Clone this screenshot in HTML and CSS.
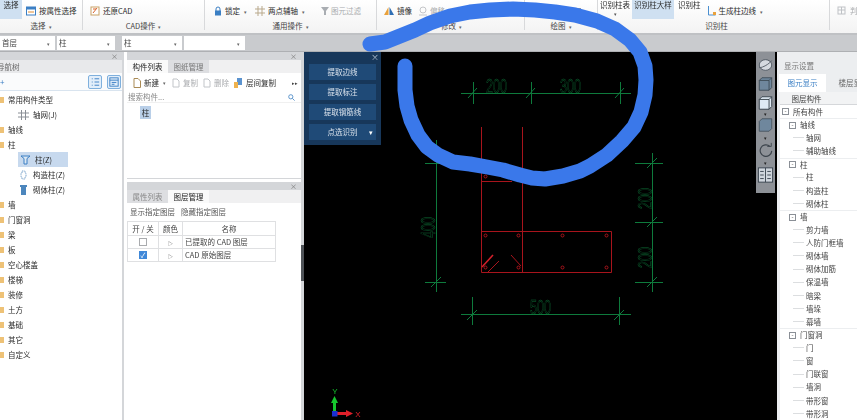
FILE: index.html
```html
<!DOCTYPE html>
<html lang="zh-CN">
<head>
  <meta charset="UTF-8">
  <title>柱大样识别</title>
  <link rel="stylesheet" href="styles.css">
</head>
<body>
<div class="app">
  <!-- ribbon -->
  <div class="ribbon">
    <div class="group">
      <div class="row">
        <div class="tall tall-on sel-btn">选择</div>
        <svg class="ic ml4" viewBox="0 0 10 10"><rect x=".5" y="1" width="9" height="8" fill="#fff" stroke="#3b7fc4"/><rect x=".5" y="1" width="9" height="2.5" fill="#3b7fc4"/><path d="M2 6h6" stroke="#e08a2e"/></svg>
        <span class="ml3">按属性选择</span>
      </div>
      <div class="label">选择 <i>▾</i></div>
    </div>
    <div class="group">
      <div class="row pl7">
        <svg class="ic" viewBox="0 0 10 10"><rect x="1" y="1" width="8" height="8" fill="#fff" stroke="#c9a266"/><path d="M3 7l4-5M3 3h3" stroke="#d9622b"/></svg>
        <span class="ml3">还原CAD</span>
      </div>
      <div class="label">CAD操作 <i>▾</i></div>
    </div>
    <div class="group">
      <div class="row pl8">
        <svg class="ic" viewBox="0 0 10 10"><path d="M3 5V3a2 2 0 0 1 4 0v2" fill="none" stroke="#3b7fc4"/><rect x="2" y="4.5" width="6" height="5" fill="#3b7fc4"/></svg>
        <span class="ml2">锁定</span><i class="drop">▾</i>
        <svg class="ic ml8" viewBox="0 0 10 10"><path d="M3 0v10M7 0v10M0 3h10M0 7h10" stroke="#b9a98c"/></svg>
        <span class="ml3">两点辅轴</span><i class="drop">▾</i>
        <svg class="ic ml15" viewBox="0 0 10 10"><path d="M1 1h8L6 5v4H4V5z" fill="#a9adb2"/></svg>
        <span class="ml1 off">图元过滤</span>
      </div>
      <div class="label">通用操作 <i>▾</i></div>
    </div>
    <div class="group">
      <div class="row pl7">
        <svg class="ic" viewBox="0 0 10 10"><path d="M4.500 1v8H0z" fill="#e9a13b"/><path d="M5.500 1v8H10z" fill="#2f6fb5"/></svg>
        <span class="ml3">镜像</span>
        <svg class="ic ml6" viewBox="0 0 10 10"><circle cx="5" cy="4" r="3" fill="none" stroke="#c4c6c9"/><path d="M1 9h8" stroke="#c4c6c9"/></svg>
        <span class="ml2 off">偏移</span>
      </div>
      <div class="label label-edit">修改 <i>▾</i></div>
    </div>
    <div class="group">
      <div class="row pl13">
        <svg class="ic" viewBox="0 0 10 10"><path d="M1 9l8-8" stroke="#d5d6d8"/></svg>
        <span class="ml3 off">直线</span>
        <span class="rect-ic"></span>
      </div>
      <div class="label">绘图 <i>▾</i></div>
    </div>
    <div class="group">
      <div class="row pl11 top">
        <div class="tall">识别柱表<i class="under">▾</i></div>
        <div class="tall tall-on big-btn">识别柱大样</div>
        <div class="tall ml4">识别柱</div>
        <div class="gen">
          <svg class="ic" viewBox="0 0 10 10"><path d="M1.500 0v9h7" fill="none" stroke="#4a8fd0"/><path d="M6 6h3v3H6z" fill="#e9a13b"/></svg>
          <span class="ml2">生成柱边线</span><i class="drop">▾</i>
        </div>
      </div>
      <div class="label label-col">识别柱</div>
    </div>
    <div class="group last">
      <div class="row pl7">
        <svg class="ic" viewBox="0 0 10 10"><rect x="1" y="1" width="7" height="7" fill="none" stroke="#bfc2c6"/><path d="M1 4h7M4.500 1v7" stroke="#bfc2c6"/></svg>
        <span class="ml3 off">判断</span>
      </div>
    </div>
  </div>

  <!-- filter bar -->
  <div class="filters">
    <div class="pick w55"><span>首层</span><i>▾</i></div>
    <div class="pick w58"><span>柱</span><i>▾</i></div>
    <div class="pick w60 ml5"><span>柱</span><i>▾</i></div>
    <div class="pick w61"><span></span><i>▾</i></div>
  </div>

  <div class="main">
    <!-- navigation tree -->
    <div class="nav">
      <div class="bar"><b>×</b></div>
      <div class="nav-title">导航树</div>
      <div class="nav-tools">
        <span class="plus">+</span>
        <span class="view-btn">
          <svg viewBox="0 0 13 13"><path d="M3 3h1M3 6.500h1M3 10h1M6 3h5M6 6.500h5M6 10h5" stroke="#3b7fc4"/></svg>
        </span>
        <span class="view-btn">
          <svg viewBox="0 0 13 13"><rect x="2" y="2" width="9" height="9" fill="none" stroke="#3b7fc4"/><path d="M2 4.500h9M4 7h5M4 9h3" stroke="#3b7fc4"/></svg>
        </span>
      </div>
      <ul class="tree">
        <li class="folder">常用构件类型</li>
        <li class="leaf"><svg viewBox="0 0 11 10"><path d="M3.500 0v10M7.500 0v10M0 3h11M0 7h11" stroke="#8a8f96"/></svg>轴网(J)</li>
        <li class="folder">轴线</li>
        <li class="folder">柱</li>
        <li class="leaf on"><svg viewBox="0 0 11 10"><path d="M1 1h9L7 3.500V9H4V3.500z" fill="#dbe8f4" stroke="#3b7fc4"/></svg>柱(Z)</li>
        <li class="leaf"><svg viewBox="0 0 11 10"><path d="M4 1h3v2h1v4H7v2H4V7H3V3h1z" fill="#fff" stroke="#7fa6cc" stroke-dasharray="1 .6"/></svg>构造柱(Z)</li>
        <li class="leaf"><svg viewBox="0 0 11 10"><path d="M2 0h7v2H8v8H3V2H2z" fill="#4c86bd"/></svg>砌体柱(Z)</li>
        <li class="folder">墙</li>
        <li class="folder">门窗洞</li>
        <li class="folder">梁</li>
        <li class="folder">板</li>
        <li class="folder">空心楼盖</li>
        <li class="folder">楼梯</li>
        <li class="folder">装修</li>
        <li class="folder">土方</li>
        <li class="folder">基础</li>
        <li class="folder">其它</li>
        <li class="folder">自定义</li>
      </ul>
    </div>

    <!-- component list + layer manager -->
    <div class="mid">
      <div class="mid-top">
        <div class="bar"><b>×</b></div>
        <div class="tabs">
          <span class="tab active">构件列表</span>
          <span class="tab">图纸管理</span>
        </div>
        <div class="tools">
          <svg class="ic" viewBox="0 0 10 10"><path d="M2 .5h4l2.500 2.500v6.500H2z" fill="#fff" stroke="#a98a55"/></svg>
          <span class="ml2">新建</span><i class="drop">▾</i>
          <svg class="ic ml5" viewBox="0 0 10 10"><path d="M2 1h4l2 2v6H2z" fill="none" stroke="#c2c5c9"/></svg>
          <span class="ml2 off">复制</span>
          <svg class="ic ml4" viewBox="0 0 10 10"><path d="M2 1h4l2 2v6H2z" fill="none" stroke="#c2c5c9"/></svg>
          <span class="ml2 off">删除</span>
          <svg class="ic ml4" viewBox="0 0 10 10"><path d="M4 0h5v7H4z" fill="#5b93cf"/><path d="M1 4h4v6H1z" fill="#eeb24f"/></svg>
          <span class="ml3">层间复制</span>
          <b class="more">▸▸</b>
        </div>
        <div class="search">
          <span>搜索构件...</span>
          <svg viewBox="0 0 8 8"><circle cx="3.200" cy="3.200" r="2.400" fill="none" stroke="#4d8ac6"/><path d="M5 5l2.500 2.500" stroke="#4d8ac6"/></svg>
        </div>
        <div class="list"><span class="list-item">柱</span></div>
      </div>
      <div class="mid-bottom">
        <div class="bar"><b>×</b></div>
        <div class="tabs">
          <span class="tab dim">属性列表</span>
          <span class="tab active">图层管理</span>
        </div>
        <div class="layer-actions"><span>显示指定图层</span><span>隐藏指定图层</span></div>
        <table class="layers">
          <tr><th class="c1">开 / 关</th><th class="c2">颜色</th><th>名称</th></tr>
          <tr><td><span class="check"></span></td><td class="tri">▷</td><td>已提取的 CAD 图层</td></tr>
          <tr><td><span class="check yes">✓</span></td><td class="tri">▷</td><td>CAD 原始图层</td></tr>
        </table>
      </div>
    </div>

    <div class="resizer"><span></span></div>

    <!-- drawing area -->
    <div class="canvas">
      <svg class="drawing" viewBox="304 52 473 368" width="473" height="368">
        <g stroke="#0e7a3c" fill="none" stroke-width="1">
          <path d="M461 93.500H631M473.500 82v22M531.500 82v22M620.500 82v22M468 98l9-10M526 98l9-10M615 98l9-10"/>
          <path d="M436.500 140V292M425 282.500h21M425 163.500h21M431 287l10-10"/>
          <path d="M652.500 153V292M635 163.500h28M635 222.500h28M635 282.500h28M647 168l10-10M647 227l10-10M647 287l10-10"/>
          <path d="M461 314.500H631M472.500 297v28M619.500 297v28M467 320l10-10M614 320l10-10"/>
        </g>
        <g class="dim-text">
          <text x="486" y="93" textLength="21" lengthAdjust="spacingAndGlyphs">200</text>
          <text x="560" y="93" textLength="21" lengthAdjust="spacingAndGlyphs">300</text>
          <text x="530" y="314" textLength="21" lengthAdjust="spacingAndGlyphs">500</text>
          <text transform="translate(435 238) rotate(-90)" textLength="21" lengthAdjust="spacingAndGlyphs">400</text>
          <text transform="translate(652 209) rotate(-90)" textLength="21" lengthAdjust="spacingAndGlyphs">200</text>
          <text transform="translate(652 268) rotate(-90)" textLength="21" lengthAdjust="spacingAndGlyphs">200</text>
        </g>
        <g stroke="#a8141c" fill="none" stroke-width="1">
          <path d="M481.500 127V272.500H611.500V231.500H481.500M522.500 127V272.500M481.500 181.500H512"/>
          <circle cx="485.500" cy="176.500" r="1.500"/>
          <circle cx="485.500" cy="235.500" r="1.500"/><circle cx="518.500" cy="235.500" r="1.500"/>
          <circle cx="562.500" cy="235.500" r="1.500"/><circle cx="606.500" cy="235.500" r="1.500"/>
          <circle cx="485.500" cy="267.500" r="1.500"/><circle cx="518.500" cy="267.500" r="1.500"/>
          <circle cx="562.500" cy="267.500" r="1.500"/><circle cx="606.500" cy="267.500" r="1.500"/>
          <path d="M488 272l11-11M511 255l10 11"/>
          <path d="M482 267l11-12" stroke="#d3202a" stroke-width="1.600"/>
        </g>
        <g>
          <path d="M334.500 411V402" stroke="#16c72e" stroke-width="3"/>
          <path d="M334.500 396l3.500 7h-7z" fill="#16c72e"/>
          <path d="M337 413.500h10" stroke="#e0202a" stroke-width="3"/>
          <path d="M353 413.500l-7-3.500v7z" fill="#e0202a"/>
          <rect x="332" y="411" width="5.500" height="5.500" fill="#1a2fd0"/>
          <text class="axis-y" x="335" y="394">Y</text>
          <text class="axis-x" x="358" y="417">X</text>
        </g>
      </svg>

      <div class="float-panel">
        <div class="float-head">×</div>
        <div class="float-btn">提取边线</div>
        <div class="float-btn">提取标注</div>
        <div class="float-btn">提取钢筋线</div>
        <div class="float-btn split">点选识别<i>▾</i></div>
      </div>

      <div class="view-tools">
        <svg viewBox="0 0 18 18"><ellipse cx="9" cy="9" rx="7" ry="6" fill="#d5dae0" stroke="#4d5660"/><path d="M2 12C6 12 13 8 16 4" stroke="#4d5660" fill="none"/></svg>
        <svg class="mt3" viewBox="0 0 18 18"><path d="M2 5l3-3h11v11l-3 3H2z" fill="#6f879d" stroke="#3c4854"/><path d="M2 5h11v11M13 5l3-3" stroke="#3c4854" fill="none"/></svg>
        <svg class="mt3" viewBox="0 0 18 18"><path d="M2 5l3-3h11v11l-3 3H2z" fill="#dfeaf4" stroke="#2f3943"/><path d="M2 5h11v11M13 5l3-3" stroke="#2f3943" fill="none"/></svg>
        <i class="tool-arrow">▾</i>
        <svg viewBox="0 0 18 18"><path d="M2 5l3-3h11v11l-3 3H2z" fill="#6f879d" stroke="#46525e"/></svg>
        <i class="tool-arrow tall-arrow">▾</i>
        <svg viewBox="0 0 18 18"><path d="M14 5a6.500 6.500 0 1 0 2 5" fill="none" stroke="#3c444c" stroke-width="1.300"/><path d="M11 5h4.500V1" fill="none" stroke="#3c444c"/></svg>
        <i class="tool-arrow tall-arrow">▾</i>
        <svg viewBox="0 0 18 18"><rect x="1" y="1" width="16" height="16" fill="#cfd6dd" stroke="#333e49"/><path d="M9 1v16M3 5h4M3 9h4M3 13h4M11 5h4M11 9h4M11 13h4" stroke="#333e49"/></svg>
      </div>
    </div>

    <!-- display settings -->
    <div class="settings">
      <div class="set-title">显示设置</div>
      <div class="set-tabs">
        <span class="set-tab active">图元显示</span>
        <span class="set-tab">楼层显示</span>
      </div>
      <div class="set-head">图层构件</div>
      <ul class="set-tree">
        <li class="top"><u>-</u>所有构件</li>
        <li class="cat"><u>-</u>轴线</li>
        <li class="item">轴网</li>
        <li class="item">辅助轴线</li>
        <li class="cat"><u>-</u>柱</li>
        <li class="item">柱</li>
        <li class="item">构造柱</li>
        <li class="item">砌体柱</li>
        <li class="cat"><u>-</u>墙</li>
        <li class="item">剪力墙</li>
        <li class="item">人防门框墙</li>
        <li class="item">砌体墙</li>
        <li class="item">砌体加筋</li>
        <li class="item">保温墙</li>
        <li class="item">暗梁</li>
        <li class="item">墙垛</li>
        <li class="item">幕墙</li>
        <li class="cat"><u>-</u>门窗洞</li>
        <li class="item">门</li>
        <li class="item">窗</li>
        <li class="item">门联窗</li>
        <li class="item">墙洞</li>
        <li class="item">带形窗</li>
        <li class="item">带形洞</li>
      </ul>
    </div>
  </div>

  <!-- hand drawn mark over the whole window -->
  <svg class="scribble" viewBox="0 0 857 420" width="857" height="420">
    <polyline points="370,44 385,42 400,36 415,30 430,23 450,16 470,12 490,10 513,9 535,10 555,12 575,15 597,21 615,29 630,40 640,52 645,66 646,80 645,95 641,112 634,127 622,141 607,155 590,166 580,171 563,176 545,179 532,178 520,175 503,170 487,167 470,164 453,162 438,155 427,147 418,135 411,120 407,106 405,90 405,78 405,66"/>
  </svg>
</div>
</body>
</html>
```
FILE: styles.css
```css
* {
  box-sizing: border-box;
}
html, body {
  margin: 0;
  height: 100%;
  overflow: hidden;
}
body {
  font-family: "Noto Sans CJK SC", "Noto Sans", sans-serif;
  font-size: 7.5px;
  line-height: 1;
  color: #2a2a2a;
  background: #fff;
}
i, b, u {
  font-style: normal;
  font-weight: normal;
  text-decoration: none;
}
ul {
  list-style: none;
  margin: 0;
  padding: 0;
}
svg {
  display: block;
  flex: none;
}
.app {
  position: relative;
  width: 857px;
  height: 420px;
  overflow: hidden;
  display: flex;
  flex-direction: column;
  filter: blur(0.4px);
}

/* ribbon */
.ribbon {
  height: 35px;
  display: grid;
  grid-template-columns: 83px 122px 172px 148px 73px 232px 1fr;
  background: linear-gradient(#fff, #f3f3f3);
  border-bottom: 2px solid #bfc1c4;
}
.group {
  border-right: 1px solid #d8d9db;
  margin-bottom: 3px;
  display: flex;
  flex-direction: column;
}
.group.last {
  border-right: none;
}
.row {
  height: 19px;
  display: flex;
  align-items: center;
  white-space: nowrap;
  padding-top: 3px;
}
.row.top {
  align-items: flex-start;
  padding-top: 0;
}
.label {
  flex: 1;
  display: flex;
  align-items: center;
  justify-content: center;
  gap: 3px;
  color: #444;
  padding-top: 3px;
}
.label i, .drop {
  font-size: 5px;
  color: #666;
}
.label-edit {
  justify-content: flex-end;
  padding-right: 62px;
}
.label-col {
  padding-left: 6px;
}
.drop {
  margin-left: 4px;
}
.ic {
  width: 10px;
  height: 10px;
}
.off {
  color: #a9abae;
}
.ml1 { margin-left: 1px; }
.ml2 { margin-left: 2px; }
.ml3 { margin-left: 3px; }
.ml4 { margin-left: 4px; }
.ml5 { margin-left: 5px; }
.ml6 { margin-left: 6px; }
.ml8 { margin-left: 8px; }
.ml15 { margin-left: 15px; }
.pl7 { padding-left: 7px; }
.pl8 { padding-left: 8px; }
.pl11 { padding-left: 11px; }
.pl13 { padding-left: 13px; }
.tall {
  height: 19px;
  padding-top: 1px;
  text-align: center;
  position: relative;
}
.tall-on {
  background: #cfe0f1;
}
.sel-btn {
  width: 22px;
  height: 19px;
  margin-top: -3px;
}
.big-btn {
  width: 42px;
  margin-left: 2px;
}
.under {
  display: block;
  font-size: 5px;
  margin-top: 2px;
  color: #555;
}
.gen {
  display: flex;
  align-items: center;
  height: 19px;
  margin-left: 6px;
  padding-top: 3px;
}
.rect-ic {
  width: 8px;
  height: 7px;
  margin-left: 7px;
  border: 1px solid #9a9a9a;
}

/* filter bar */
.filters {
  height: 17px;
  display: flex;
  gap: 2px;
  padding-top: 1px;
  background: #c9cbce;
  border-bottom: 1px solid #aeb0b3;
}
.pick {
  height: 14px;
  background: #fff;
  display: flex;
  align-items: center;
  justify-content: space-between;
  padding: 0 5px 0 2px;
  color: #444;
}
.pick i {
  font-size: 5px;
  color: #666;
}
.w55 { width: 55px; }
.w58 { width: 58px; }
.w60 { width: 60px; }
.w61 { width: 61px; }

/* panels */
.main {
  flex: 1;
  min-height: 0;
  display: flex;
}
.bar {
  height: 8px;
  background: #d4d6d9;
  text-align: right;
  padding-right: 4px;
  color: #777;
  font-size: 7px;
}
.bar b {
  display: block;
  line-height: 8px;
}
.nav {
  width: 124px;
  flex: none;
  border-right: 2px solid #d4d6d9;
  margin-right: 3px;
}
.nav-title {
  height: 13px;
  line-height: 13px;
  background: #e8e9eb;
  text-indent: -3px;
  color: #666;
  overflow: hidden;
}
.nav-tools {
  height: 18px;
  display: flex;
  align-items: center;
  justify-content: flex-end;
  gap: 5px;
  padding-right: 1px;
  border-bottom: 1px solid #d9e4ef;
  background: #fafbfc;
}
.plus {
  margin-right: auto;
  color: #3b7fc4;
  font-size: 8px;
}
.view-btn {
  width: 14px;
  height: 14px;
  background: #e2eefa;
  border: 1px solid #7fb0dd;
  border-radius: 2px;
}
.view-btn svg {
  width: 12px;
  height: 12px;
}
.tree li {
  height: 15px;
  display: flex;
  align-items: center;
}
.tree {
  padding-top: 1px;
}
.folder::before {
  content: "";
  width: 4px;
  height: 6px;
  margin-right: 4px;
  background: #eec277;
}
.leaf {
  padding-left: 18px;
}
.leaf svg {
  width: 11px;
  height: 10px;
  margin-right: 4px;
}
.leaf.on {
  background: #c7d9ee;
  margin-left: 18px;
  width: 50px;
  padding-left: 2px;
}
.mid {
  width: 174px;
  flex: none;
  display: flex;
  flex-direction: column;
}
.mid-top {
  height: 127px;
  border-bottom: 1px solid #d4d6d9;
  margin-bottom: 3px;
}
.mid-bottom {
  flex: 1;
}
.tabs {
  height: 13px;
  display: flex;
  background: #f0f0f1;
}
.tab {
  width: 41px;
  line-height: 13px;
  text-align: center;
  background: #dddee1;
  color: #777;
}
.tab.active {
  background: #fafafa;
  color: #222;
}
.tab.dim {
  color: #888;
}
.tools {
  height: 19px;
  display: flex;
  align-items: center;
  padding-left: 5px;
  white-space: nowrap;
}
.more {
  margin-left: auto;
  margin-right: 3px;
  font-size: 5px;
  color: #444;
}
.search {
  height: 11px;
  display: flex;
  align-items: center;
  justify-content: space-between;
  padding: 0 6px 0 1px;
  color: #888;
  border-bottom: 1px solid #f0f0f0;
}
.search svg {
  width: 7px;
  height: 7px;
}
.list {
  padding: 3px 0 0 13px;
}
.list-item {
  display: block;
  width: 11px;
  height: 13px;
  line-height: 13px;
  text-align: center;
  background: #b9cfe8;
  color: #222;
}
.layer-actions {
  height: 18px;
  display: flex;
  align-items: center;
  gap: 6px;
  padding-left: 3px;
  color: #555;
}
.layers {
  width: 149px;
  border-collapse: collapse;
  table-layout: fixed;
}
.layers th, .layers td {
  height: 13px;
  padding: 0;
  border: 1px solid #dfe0e2;
  font-weight: normal;
  color: #444;
  text-align: center;
}
.layers th {
  height: 14px;
}
.layers td:last-child {
  text-align: left;
  padding-left: 2px;
}
.c1 { width: 31px; }
.c2 { width: 24px; }
.tri {
  font-size: 5px;
  color: #888;
}
.check {
  display: block;
  width: 8px;
  height: 8px;
  margin: 0 auto;
  border: 1px solid #a9abae;
  background: #fff;
  color: #fff;
  font-size: 7px;
  line-height: 7px;
}
.check.yes {
  background: #3f88d8;
  border-color: #3f88d8;
}
.resizer {
  width: 3px;
  flex: none;
  background: #d4d6d9;
  padding-top: 193px;
}
.resizer span {
  display: block;
  height: 36px;
  background: #4f5358;
}

/* drawing */
.canvas {
  flex: 1;
  background: #000;
  position: relative;
  overflow: hidden;
}
.drawing {
  position: absolute;
  left: 0;
  top: 0;
}
.dim-text text {
  font-family: "Liberation Sans", sans-serif;
  font-size: 20px;
  fill: none;
  stroke: #0c6c35;
  stroke-width: 0.45;
}
.axis-y, .axis-x {
  font-family: "Liberation Sans", sans-serif;
  font-size: 8px;
  text-anchor: middle;
}
.axis-y { fill: #16c72e; }
.axis-x { fill: #e0202a; }
.float-panel {
  position: absolute;
  left: 0;
  top: 0;
  width: 77px;
  height: 93px;
  background: #17375a;
  padding: 0 5px;
}
.float-head {
  height: 12px;
  line-height: 9px;
  text-align: right;
  color: #b8c6d6;
  font-size: 8px;
  margin-right: -3px;
}
.float-btn {
  height: 16px;
  line-height: 16px;
  margin-bottom: 4px;
  text-align: center;
  background: #1f4a77;
  color: #dbe3ec;
  position: relative;
}
.float-btn i {
  position: absolute;
  right: 3px;
  top: 0;
  font-size: 7px;
  color: #fff;
}
.view-tools {
  position: absolute;
  right: 2px;
  top: 0;
  width: 19px;
  height: 141px;
  background: #8d9197;
  display: flex;
  flex-direction: column;
  align-items: center;
  padding-top: 5px;
}
.view-tools svg {
  width: 17px;
  height: 16px;
}
.mt3 {
  margin-top: 3px;
}
.tool-arrow {
  height: 6px;
  line-height: 6px;
  font-size: 5px;
  color: #222;
}
.tall-arrow {
  height: 9px;
  line-height: 9px;
}

/* display settings */
.settings {
  width: 80px;
  flex: none;
  background: #eceef0;
  overflow: hidden;
  white-space: nowrap;
}
.set-title {
  height: 22px;
  line-height: 27px;
  padding-left: 7px;
  color: #777;
}
.set-tabs {
  height: 18px;
  display: flex;
  gap: 4px;
  padding-left: 2px;
}
.set-tab {
  width: 47px;
  flex: none;
  line-height: 18px;
  text-align: center;
  color: #666;
}
.set-tab.active {
  background: #fff;
  color: #3b7fc4;
}
.set-head {
  height: 13px;
  line-height: 13px;
  background: #f2f3f4;
  border-bottom: 1px solid #d5d7da;
  margin-left: 3px;
  text-align: center;
  padding-right: 24px;
  color: #444;
}
.set-tree {
  background: #fff;
  margin-left: 3px;
}
.set-tree li {
  height: 13.13px;
  display: flex;
  align-items: center;
  color: #444;
  position: relative;
}
.set-tree u {
  width: 7px;
  height: 7px;
  flex: none;
  border: 1px solid #8a8f96;
  background: #fff;
  font-size: 6px;
  line-height: 4px;
  text-align: center;
  margin-right: 4px;
}
.top {
  padding-left: 2px;
}
.cat {
  padding-left: 9px;
  border-top: 1px solid #eceef0;
}
.item {
  padding-left: 26px;
}
.item::before {
  content: "";
  position: absolute;
  left: 13px;
  top: 6px;
  width: 11px;
  border-top: 1px solid #dcdee0;
}

/* blue pen stroke */
.scribble {
  position: absolute;
  left: 0;
  top: 0;
  pointer-events: none;
}
.scribble polyline {
  fill: none;
  stroke: #3a78ea;
  stroke-width: 15;
  stroke-linecap: round;
  stroke-linejoin: round;
}
```
